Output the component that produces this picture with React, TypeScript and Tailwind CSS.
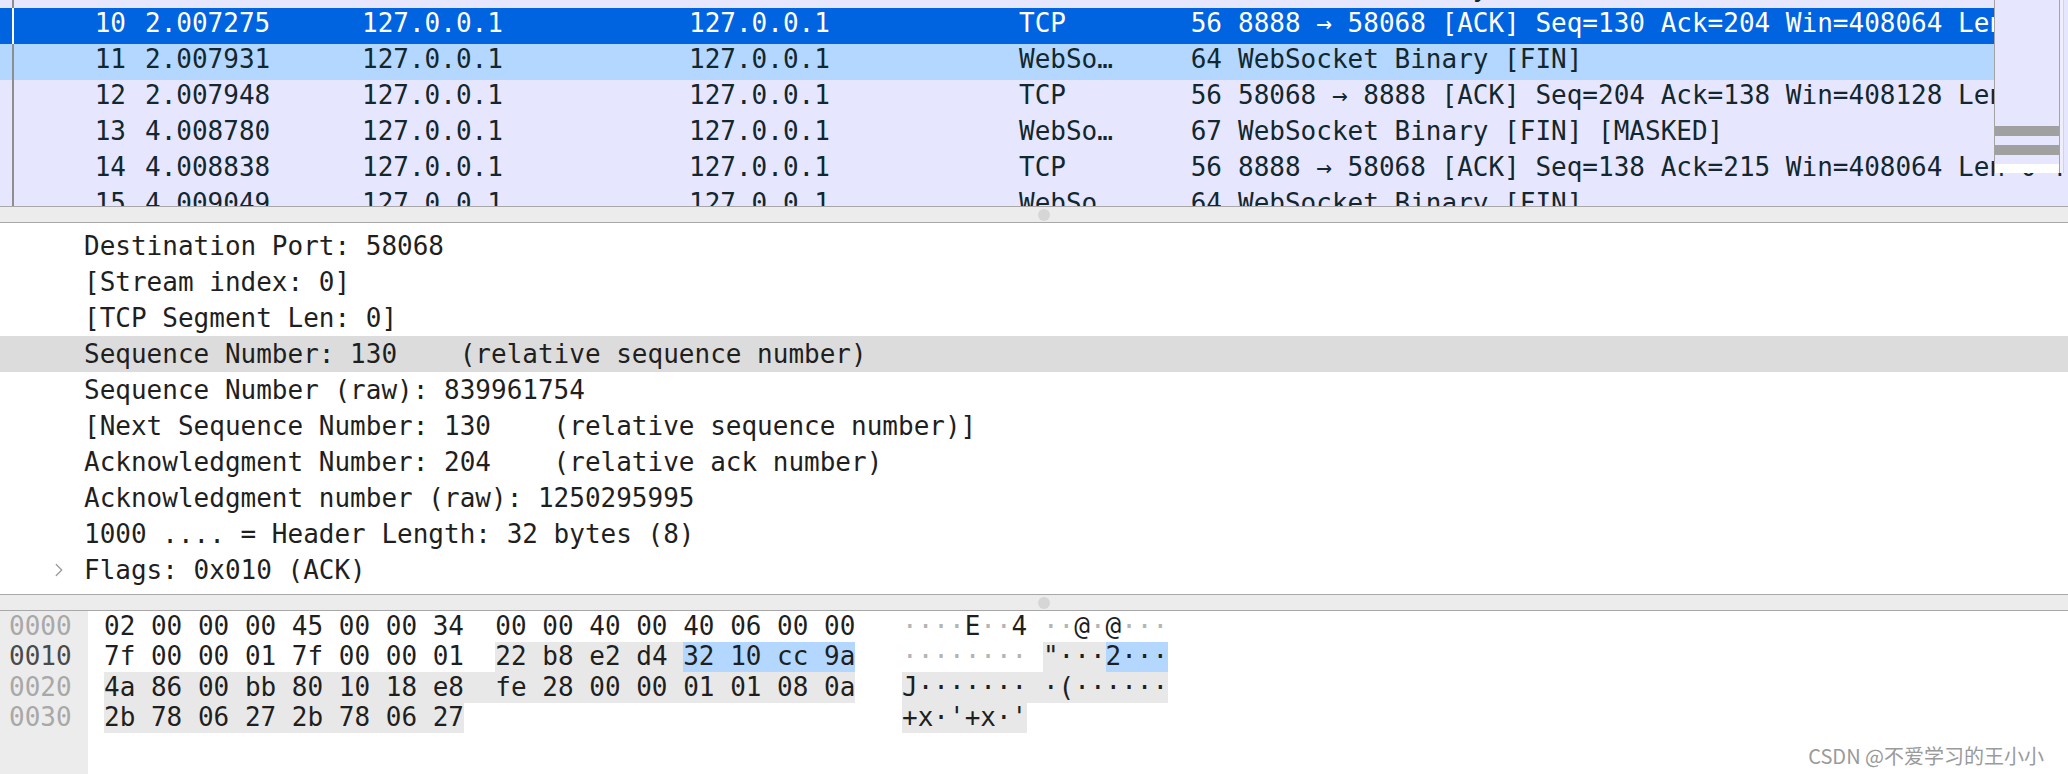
import { ChevronRight } from "lucide-react";

const MONO = "font-['DejaVu_Sans_Mono','Liberation_Mono',monospace] text-[26px]";

type Packet = {
  no: string;
  time: string;
  proto: string;
  len: string;
  info: string;
  state?: "selected" | "related";
};

const PACKETS: Packet[] = [
  { no: "9", time: "2.007231", proto: "WebSo…", len: "67", info: "WebSocket Binary [FIN] [MASKED]" },
  {
    no: "10",
    time: "2.007275",
    proto: "TCP",
    len: "56",
    info: "8888 → 58068 [ACK] Seq=130 Ack=204 Win=408064 Len=0 TSval=729286183 TSecr=729286183",
    state: "selected",
  },
  { no: "11", time: "2.007931", proto: "WebSo…", len: "64", info: "WebSocket Binary [FIN]", state: "related" },
  {
    no: "12",
    time: "2.007948",
    proto: "TCP",
    len: "56",
    info: "58068 → 8888 [ACK] Seq=204 Ack=138 Win=408128 Len=0 TSval=729286183 TSecr=729286183",
  },
  { no: "13", time: "4.008780", proto: "WebSo…", len: "67", info: "WebSocket Binary [FIN] [MASKED]" },
  {
    no: "14",
    time: "4.008838",
    proto: "TCP",
    len: "56",
    info: "8888 → 58068 [ACK] Seq=138 Ack=215 Win=408064 Len=0 TSval=729288184 TSecr=729288184",
  },
  { no: "15", time: "4.009049", proto: "WebSo…", len: "64", info: "WebSocket Binary [FIN]" },
];

const DETAILS = [
  "Destination Port: 58068",
  "[Stream index: 0]",
  "[TCP Segment Len: 0]",
  "Sequence Number: 130    (relative sequence number)",
  "Sequence Number (raw): 839961754",
  "[Next Sequence Number: 130    (relative sequence number)]",
  "Acknowledgment Number: 204    (relative ack number)",
  "Acknowledgment number (raw): 1250295995",
  "1000 .... = Header Length: 32 bytes (8)",
  "Flags: 0x010 (ACK)",
];

type Seg = { t: string; hl?: "gray" | "blue" };

const HEX_ROWS: { off: string; active?: boolean; hex: Seg[]; ascii: Seg[] }[] = [
  {
    off: "0000",
    hex: [{ t: "02 00 00 00 45 00 00 34  00 00 40 00 40 06 00 00" }],
    ascii: [{ t: "····E··4 ··@·@···" }],
  },
  {
    off: "0010",
    active: true,
    hex: [
      { t: "7f 00 00 01 7f 00 00 01  " },
      { t: "22 b8 e2 d4 ", hl: "gray" },
      { t: "32 10 cc 9a", hl: "blue" },
    ],
    ascii: [{ t: "········ " }, { t: '"···', hl: "gray" }, { t: "2···", hl: "blue" }],
  },
  {
    off: "0020",
    hex: [{ t: "4a 86 00 bb 80 10 18 e8  fe 28 00 00 01 01 08 0a", hl: "gray" }],
    ascii: [{ t: "J······· ·(······", hl: "gray" }],
  },
  {
    off: "0030",
    hex: [{ t: "2b 78 06 27 2b 78 06 27", hl: "gray" }],
    ascii: [{ t: "+x·'+x·'", hl: "gray" }],
  },
];

export default function App() {
  return (
    <div className="relative flex h-[774px] w-[2068px] flex-col overflow-hidden bg-white">
      {/* packet list */}
      <div className={`relative h-[206px] shrink-0 overflow-hidden bg-[#e7e6ff] ${MONO}`}>
        <div className="-mt-[28px] flex flex-col">
          {PACKETS.map((p) => (
            <PacketRow key={p.no} p={p} />
          ))}
        </div>

        {/* minimap + scrollbar strip */}
        <div className="absolute right-0 top-0 flex h-[173px]">
          <div className="flex w-[66px] flex-col border-x border-[#a3a3a3] bg-[#e7e6ff]">
            <div className="flex-1" />
            <div className="h-[10px] bg-[#a0a0a0]" />
            <div className="h-[9px]" />
            <div className="h-[10px] bg-[#a0a0a0]" />
            <div className="h-[9px]" />
            <div className="h-[9px] bg-white" />
          </div>
          <div className="w-[3px] bg-[#efeffc]" />
          <div className="w-[5px] border-l border-[#d2d2e0] bg-[#e7e6ff]" />
        </div>
      </div>

      <Splitter />

      {/* packet details */}
      <div className={`h-[371px] shrink-0 overflow-hidden bg-white pt-[5px] text-[#1f1f1f] ${MONO}`}>
        {DETAILS.map((d, i) => (
          <div
            key={d}
            className={`flex h-[36px] items-center whitespace-pre leading-[36px] ${i === 3 ? "bg-[#dcdcdc]" : ""}`}
          >
            <div className="flex w-[84px] shrink-0 justify-end pr-[14px]">
              {i === DETAILS.length - 1 ? (
                <ChevronRight size={22} strokeWidth={1.4} className="text-[#9a9a9a]" />
              ) : null}
            </div>
            <span>{d}</span>
          </div>
        ))}
      </div>

      <Splitter />

      {/* bytes */}
      <div className={`flex flex-1 bg-white text-[#1f1f1f] ${MONO}`}>
        <div className="flex w-[88px] shrink-0 flex-col bg-[#ececec] pl-[9px]">
          {HEX_ROWS.map((r) => (
            <div
              key={r.off}
              className={`flex h-[30.5px] items-center ${r.active ? "text-[#4a4a4a]" : "text-[#a8a8a8]"}`}
            >
              {r.off}
            </div>
          ))}
        </div>
        <div className="flex flex-col pl-[16px]">
          {HEX_ROWS.map((r) => (
            <div key={r.off} className="flex h-[30.5px] whitespace-pre">
              <div className="flex w-[798px] shrink-0">
                {r.hex.map((s, i) => (
                  <span key={i} className={`flex h-full items-center ${hlClass(s.hl)}`}>
                    {s.t}
                  </span>
                ))}
              </div>
              <div className="flex">
                {r.ascii.map((s, i) => (
                  <span key={i} className={`flex h-full items-center ${hlClass(s.hl)}`}>
                    {s.t.split("").map((c, j) =>
                      c === "·" && !s.hl ? (
                        <span key={j} className="text-[#b4b4b4]">
                          {c}
                        </span>
                      ) : (
                        <span key={j}>{c}</span>
                      )
                    )}
                  </span>
                ))}
              </div>
            </div>
          ))}
        </div>
      </div>

      <div className="absolute bottom-[8px] right-[24px] font-['Noto_Sans_CJK_SC','Noto_Sans',sans-serif] text-[20px] leading-[20px] text-[#9a9a9a] [text-shadow:0_0_1px_#ffffff]">
        CSDN @不爱学习的王小小
      </div>
    </div>
  );
}

function PacketRow({ p }: { p: Packet }) {
  const sel = p.state === "selected";
  const bg = sel
    ? "bg-[#0064e0] text-white"
    : p.state === "related"
      ? "bg-[#b3d7ff] text-[#12272e]"
      : "bg-[#e7e6ff] text-[#12272e]";
  return (
    <div className={`flex h-[36px] shrink-0 items-start whitespace-pre leading-[31px] ${bg}`}>
      <div className="w-[12px] shrink-0" />
      <div className={`h-full w-[2px] shrink-0 ${sel ? "bg-white" : "bg-[#8e8e8e]"}`} />
      <div className="w-[131px] shrink-0 pr-[19px] text-right">{p.no}</div>
      <div className="w-[217px] shrink-0">{p.time}</div>
      <div className="w-[327px] shrink-0">127.0.0.1</div>
      <div className="w-[330px] shrink-0">127.0.0.1</div>
      <div className="w-[131px] shrink-0">{p.proto}</div>
      <div className="w-[72px] shrink-0 text-right">{p.len}</div>
      <div className="w-[16px] shrink-0" />
      <div className="shrink-0">{p.info}</div>
    </div>
  );
}

function Splitter() {
  return (
    <div className="flex h-[17px] shrink-0 items-center border-y border-[#a8a8a8] bg-[#ececec] pl-[1038px]">
      <div className="h-[12px] w-[12px] rounded-full bg-[#d6d6d6]" />
    </div>
  );
}

function hlClass(hl?: "gray" | "blue") {
  if (hl === "gray") return "bg-[#e8e8e8]";
  if (hl === "blue") return "bg-[#b3d7ff]";
  return "";
}
